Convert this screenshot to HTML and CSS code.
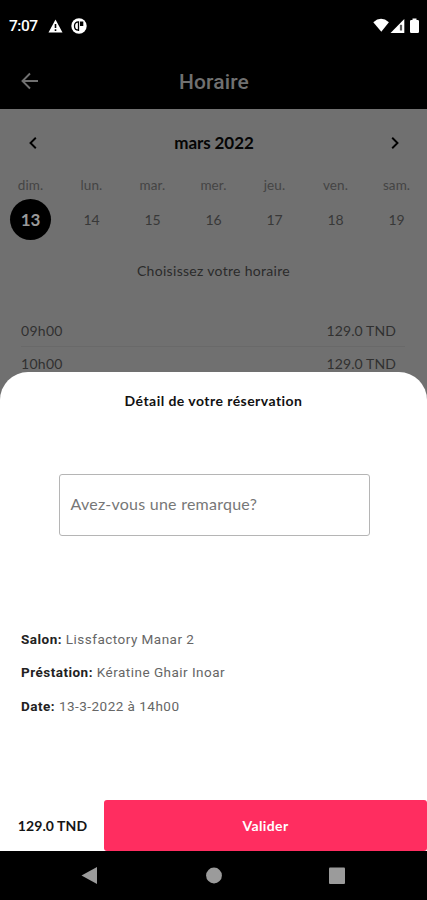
FILE: index.html
```html
<!DOCTYPE html>
<html lang="fr">
<head>
<meta charset="utf-8">
<title>Horaire</title>
<link rel="stylesheet" href="styles.css">
</head>
<body>
<div class="phone">
  <div class="status">
    <span class="clock">7:07</span>
    <svg class="warn" width="15" height="14" viewBox="0 0 15 14"><path d="M7.500.5 14.500 13.500H.5Z" fill="#fff"/><path d="M7.500 5v4M7.500 10.300v1.600" stroke="#000" stroke-width="1.600"/></svg>
    <svg class="badge" width="16" height="16" viewBox="0 0 16 16"><circle cx="8" cy="8" r="7.700" fill="#fff"/><path d="M7.500 13V3.800C5 3.800 3.500 5.500 3.500 8S5 12.200 7.500 12.200" fill="none" stroke="#000" stroke-width="1.300"/><path d="M9 3.500h3.300V8H9Z" fill="#000"/></svg>
    <svg class="signals" width="48" height="16" viewBox="0 0 48 16"><path d="M.3 4.200Q8-2.600 15.900 4.200L8.300 13.800Z" fill="#fff"/><path d="M17.500 15 31.300 1V15Z" fill="#fff"/><path d="M28 6.800V12.500" stroke="#555" stroke-width="2.200"/><path d="M39.500.5h4V2h1.200q1.300 0 1.300 1.300v10.400q0 1.300-1.300 1.300h-6.400q-1.300 0-1.300-1.300V3.300Q37 2 38.300 2h1.200Z" fill="#fff"/></svg>
  </div>
  <header class="appbar">
    <svg width="18" height="18" viewBox="0 0 18 18"><path d="M17 9H2M9 1.500 1.500 9 9 16.500" fill="none" stroke="#707070" stroke-width="1.900"/></svg>
    <h1>Horaire</h1>
  </header>
  <main>
    <div class="month">
      <svg width="8" height="12" viewBox="0 0 8 12"><path d="M6.800.8 1.500 6l5.300 5.200" fill="none" stroke="#000" stroke-width="1.900"/></svg>
      <h2>mars 2022</h2>
      <svg width="8" height="12" viewBox="0 0 8 12"><path d="M1.200.8 6.500 6l-5.300 5.200" fill="none" stroke="#000" stroke-width="1.900"/></svg>
    </div>
    <div class="week">
      <div><span>dim.</span><b class="selected">13</b></div>
      <div><span>lun.</span><b>14</b></div>
      <div><span>mar.</span><b>15</b></div>
      <div><span>mer.</span><b>16</b></div>
      <div><span>jeu.</span><b>17</b></div>
      <div><span>ven.</span><b>18</b></div>
      <div><span>sam.</span><b>19</b></div>
    </div>
    <p class="hint">Choisissez votre horaire</p>
    <div class="slot"><span>09h00</span><span class="price">129.0 TND</span></div>
    <div class="slot"><span>10h00</span><span class="price">129.0 TND</span></div>
  </main>
  <section class="sheet">
    <h3>Détail de votre réservation</h3>
    <div class="remark">Avez-vous une remarque?</div>
    <div class="details">
      <p><b>Salon:</b> Lissfactory Manar 2</p>
      <p><b>Préstation:</b> Kératine Ghair Inoar</p>
      <p><b>Date:</b> 13-3-2022 à 14h00</p>
    </div>
    <div class="footer">
      <strong>129.0 TND</strong>
      <button>Valider</button>
    </div>
  </section>
  <nav>
    <svg width="427" height="49" viewBox="0 0 427 49" fill="#9b9b9b"><path d="M81.500 24.500 97 16v17Z"/><circle cx="214" cy="24.500" r="7.900"/><rect x="329" y="16.500" width="16" height="16.500" rx="1"/></svg>
  </nav>
</div>
</body>
</html>
```
FILE: styles.css
```css
* { box-sizing: border-box; }
body, h1, h2, h3, p { margin: 0; }
.phone {
  width: 427px;
  height: 900px;
  display: flex;
  flex-direction: column;
  overflow: hidden;
  background: #707070;
  font-family: Lato, sans-serif;
}
svg { display: block; flex: none; }
.status {
  height: 52px;
  flex: none;
  display: flex;
  align-items: center;
  padding: 0 6px 0 9px;
  background: #000;
  color: #fff;
}
.clock { width: 39px; font: 500 15.500px Roboto, sans-serif; letter-spacing: -0.5px; }
.badge { margin-left: 8px; }
.signals { margin-left: auto; }
.appbar {
  height: 57px;
  flex: none;
  display: grid;
  grid-template-columns: 40px 1fr 40px;
  align-items: center;
  padding: 0 21px;
  background: #000;
}
.appbar h1 {
  text-align: center;
  color: #707070;
  font: 500 21px Roboto, sans-serif;
  letter-spacing: 0.15px;
  padding: 2px 0 0 1px;
}
main { height: 263px; flex: none; }
.month {
  height: 67px;
  display: flex;
  align-items: center;
  justify-content: space-between;
  padding: 0 28px 0 29px;
}
.month h2 { font-size: 17px; font-weight: 700; letter-spacing: -0.1px; color: #050505; }
.week {
  height: 68px;
  display: grid;
  grid-template-columns: repeat(7, 61px);
  text-align: center;
  color: #383838;
}
.week div { display: flex; flex-direction: column; align-items: center; }
.week span { height: 23px; line-height: 18px; font-size: 13.500px; letter-spacing: 0.1px; color: #444; }
.week b { width: 41px; height: 41px; line-height: 42px; font-size: 14px; font-weight: 400; }
.week .selected { border-radius: 50%; background: #000; color: #999; font-size: 17px; font-weight: 700; }
.hint { height: 70px; padding-top: 17px; text-align: center; font-size: 14px; line-height: 20px; letter-spacing: 0.3px; color: #2b2b2b; }
.slot {
  height: 33px;
  margin: 0 22px 0 21px;
  padding-right: 9px;
  display: flex;
  justify-content: space-between;
  line-height: 34px;
  font-size: 14px;
  letter-spacing: 0.3px;
  color: #303030;
  border-bottom: 1px solid #696969;
}
.slot .price { letter-spacing: 0.1px; }
.sheet {
  height: 479px;
  flex: none;
  display: flex;
  flex-direction: column;
  background: #fff;
  border-radius: 28px 28px 0 0;
}
.sheet h3 { height: 102px; padding-top: 19px; text-align: center; font-size: 14px; line-height: 19px; letter-spacing: 0.45px; color: #111; }
.remark {
  width: 311px;
  height: 62px;
  margin-left: 58.500px;
  padding-left: 11px;
  border: 1px solid #b5b5b5;
  border-radius: 3px;
  line-height: 58px;
  font-size: 16px;
  letter-spacing: 0.25px;
  color: #777;
}
.details {
  margin-top: 87px;
  padding-left: 21px;
  font: 13.500px/33.300px Roboto, sans-serif;
  letter-spacing: 0.48px;
  color: #666;
}
.details b { color: #222; }
.footer {
  height: 51px;
  margin-top: auto;
  display: flex;
}
.footer strong { width: 104px; padding-left: 1px; text-align: center; line-height: 52px; font-size: 14px; letter-spacing: 0.1px; color: #151515; }
.footer button {
  flex: 1;
  padding: 0;
  border: 0;
  border-radius: 3px;
  background: #ff2d60;
  color: #fff;
  font: 700 14px Lato, sans-serif;
  letter-spacing: 0.4px;
}
nav { height: 49px; flex: none; background: #000; }
```
